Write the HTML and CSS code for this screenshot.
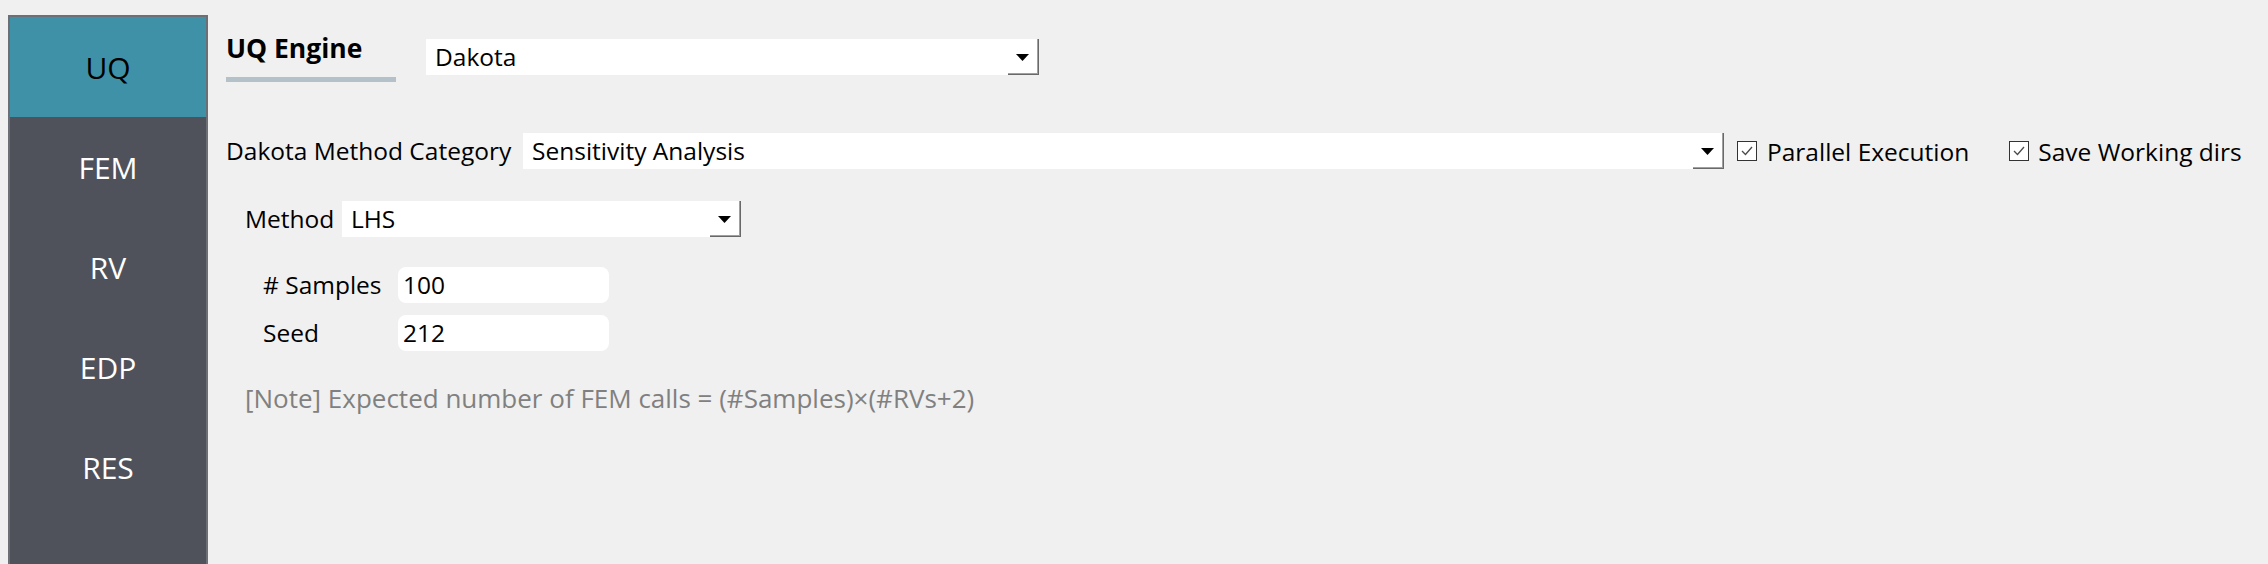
FILE: index.html
```html
<!DOCTYPE html>
<html lang="en">
<head>
<meta charset="utf-8">
<title>UQ</title>
<link rel="stylesheet" href="styles.css">
</head>
<body>
<div class="app">
  <nav class="sidebar">
    <div class="tab tab-active">UQ</div>
    <div class="tab">FEM</div>
    <div class="tab">RV</div>
    <div class="tab">EDP</div>
    <div class="tab">RES</div>
  </nav>
  <main class="main">
    <div class="header-row">
      <div class="engine-tab">
        <div class="engine-label">UQ Engine</div>
        <div class="engine-bar"></div>
      </div>
      <div class="combo combo-engine">
        <span class="combo-text">Dakota</span>
        <span class="combo-btn"><svg width="13" height="7" viewBox="0 0 13 7"><polygon points="0,0 13,0 6.5,7" fill="#000"/></svg></span>
      </div>
    </div>

    <div class="row row-category">
      <label class="label label-category">Dakota Method Category</label>
      <div class="combo combo-category">
        <span class="combo-text">Sensitivity Analysis</span>
        <span class="combo-btn"><svg width="13" height="7" viewBox="0 0 13 7"><polygon points="0,0 13,0 6.5,7" fill="#000"/></svg></span>
      </div>
      <div class="check check-first">
        <span class="check-box"><svg width="18" height="18" viewBox="0 0 18 18"><polyline points="4,9 7.5,12.5 14,5" fill="none" stroke="#4a4a4a" stroke-width="1.3"/></svg></span>
        <span class="check-label">Parallel Execution</span>
      </div>
      <div class="check check-second">
        <span class="check-box"><svg width="18" height="18" viewBox="0 0 18 18"><polyline points="4,9 7.5,12.5 14,5" fill="none" stroke="#4a4a4a" stroke-width="1.3"/></svg></span>
        <span class="check-label">Save Working dirs</span>
      </div>
    </div>

    <div class="row row-method">
      <label class="label label-method">Method</label>
      <div class="combo combo-method">
        <span class="combo-text">LHS</span>
        <span class="combo-btn"><svg width="13" height="7" viewBox="0 0 13 7"><polygon points="0,0 13,0 6.5,7" fill="#000"/></svg></span>
      </div>
    </div>

    <div class="row row-samples">
      <label class="label label-field">#&nbsp;Samples</label>
      <div class="input">100</div>
    </div>
    <div class="row row-seed">
      <label class="label label-field">Seed</label>
      <div class="input">212</div>
    </div>

    <div class="note">[Note] Expected number of FEM calls = (#Samples)×(#RVs+2)</div>
  </main>
</div>
</body>
</html>
```

FILE: styles.css
```css
html, body {
  margin: 0;
  padding: 0;
  background: #f0f0f0;
  height: 100%;
  overflow: hidden;
}

body {
  font-family: "Open Sans", "Noto Sans", sans-serif;
  color: #000;
}

.app {
  display: flex;
  height: 564px;
}

/* Sidebar */
.sidebar {
  margin: 15px 0 0 8px;
  width: 200px;
  flex: none;
  box-sizing: border-box;
  border: 2px solid #6c6f76;
  border-bottom: none;
  background: #4f525a;
  display: flex;
  flex-direction: column;
}

.tab {
  height: 100px;
  display: flex;
  align-items: center;
  justify-content: center;
  color: #fff;
  font-size: 30px;
}

.tab-active {
  background: #3e91a7;
  color: #000;
}

/* Main */
.main {
  margin-left: 18px;
  flex: 1;
  display: flex;
  flex-direction: column;
  font-size: 24.5px;
}

.header-row {
  display: flex;
  align-items: flex-start;
  margin-top: 30px;
}

.engine-tab {
  width: 170px;
  display: flex;
  flex-direction: column;
}

.engine-label {
  font-weight: 700;
  font-size: 26.5px;
  line-height: 36px;
  height: 36px;
  white-space: nowrap;
}

.engine-bar {
  margin-top: 11px;
  height: 5px;
  background: #b4c1c9;
}

.combo {
  display: flex;
  align-items: stretch;
  height: 36px;
  background: #fff;
  box-sizing: border-box;
}

.combo-text {
  flex: 1;
  padding-left: 9px;
  line-height: 36px;
  white-space: nowrap;
}

.combo-btn {
  width: 31px;
  flex: none;
  display: flex;
  align-items: center;
  justify-content: center;
  padding-right: 2px;
  box-sizing: border-box;
  box-shadow: inset -1px -1px 0 #696969, inset -2px -2px 0 #a0a0a0;
}

.combo-engine {
  margin-top: 9px;
  margin-left: 30px;
  width: 613px;
}

.row {
  display: flex;
  align-items: center;
  height: 36px;
}

.row-category {
  margin-top: 51px;
}

.row-method {
  margin-top: 32px;
  padding-left: 19px;
}

.row-samples {
  margin-top: 30px;
  padding-left: 37px;
}

.row-seed {
  margin-top: 12px;
  padding-left: 37px;
}

.label {
  white-space: nowrap;
  line-height: 36px;
}

.label-category {
  width: 297px;
}

.label-method {
  width: 97px;
}

.label-field {
  width: 135px;
}

.combo-category {
  width: 1201px;
}

.combo-method {
  width: 399px;
}

.check {
  display: flex;
  align-items: center;
  white-space: nowrap;
}

.check-first {
  margin-left: 13px;
}

.check-second {
  margin-left: 40px;
}

.check-box {
  width: 20px;
  height: 20px;
  box-sizing: border-box;
  border: 1px solid #333;
  background: #fff;
  display: flex;
  align-items: center;
  justify-content: center;
  margin-right: 10px;
}

.check-second .check-box {
  margin-right: 9px;
}

.input {
  width: 211px;
  height: 36px;
  line-height: 36px;
  background: #fff;
  border-radius: 8px;
  padding-left: 5px;
  box-sizing: border-box;
}

.note {
  margin-top: 29px;
  padding-left: 19px;
  font-size: 26px;
  line-height: 36px;
  color: #808080;
  white-space: nowrap;
}
```
